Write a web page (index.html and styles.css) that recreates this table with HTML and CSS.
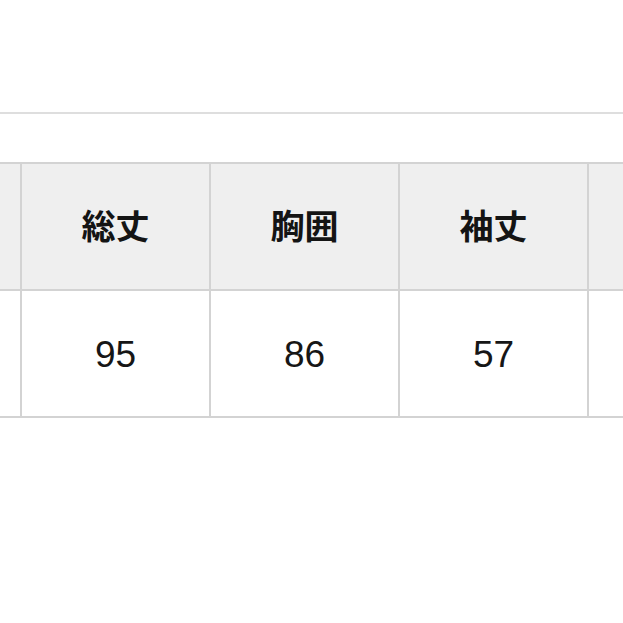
FILE: index.html
```html
<!DOCTYPE html>
<html lang="ja">
<head>
<meta charset="utf-8">
<link rel="stylesheet" href="styles.css">
</head>
<body>
<div class="page">
  <div class="rule"></div>
  <div class="size-table">
    <div class="cell head"></div>
    <div class="cell head">総丈</div>
    <div class="cell head">胸囲</div>
    <div class="cell head">袖丈</div>
    <div class="cell head"></div>
    <div class="cell"></div>
    <div class="cell">95</div>
    <div class="cell">86</div>
    <div class="cell">57</div>
    <div class="cell"></div>
  </div>
</div>
</body>
</html>
```
FILE: styles.css
```css
html, body {
  margin: 0;
  padding: 0;
  background: #ffffff;
}
.page {
  width: 623px;
  height: 623px;
  overflow: hidden;
  padding-top: 112px;
  box-sizing: border-box;
}
.rule {
  height: 2px;
  background: #dedede;
}
.size-table {
  margin-top: 48px;
  margin-left: -167px;
  display: grid;
  grid-template-columns: repeat(5, 189px);
  grid-auto-rows: 127px;
  border-top: 2px solid #d3d3d3;
  width: max-content;
}
.cell {
  border-right: 2px solid #d3d3d3;
  border-bottom: 2px solid #d3d3d3;
  display: flex;
  align-items: center;
  justify-content: center;
  padding-top: 3px;
  font-family: "Liberation Sans", Arial, sans-serif;
  font-size: 37px;
  color: #161616;
  background: #ffffff;
}
.cell.head {
  padding-top: 0;
  padding-bottom: 5px;
  background: #efefef;
  font-family: "Noto Sans CJK JP", "Noto Sans", sans-serif;
  font-weight: 700;
  font-size: 34px;
  color: #141414;
}
```
